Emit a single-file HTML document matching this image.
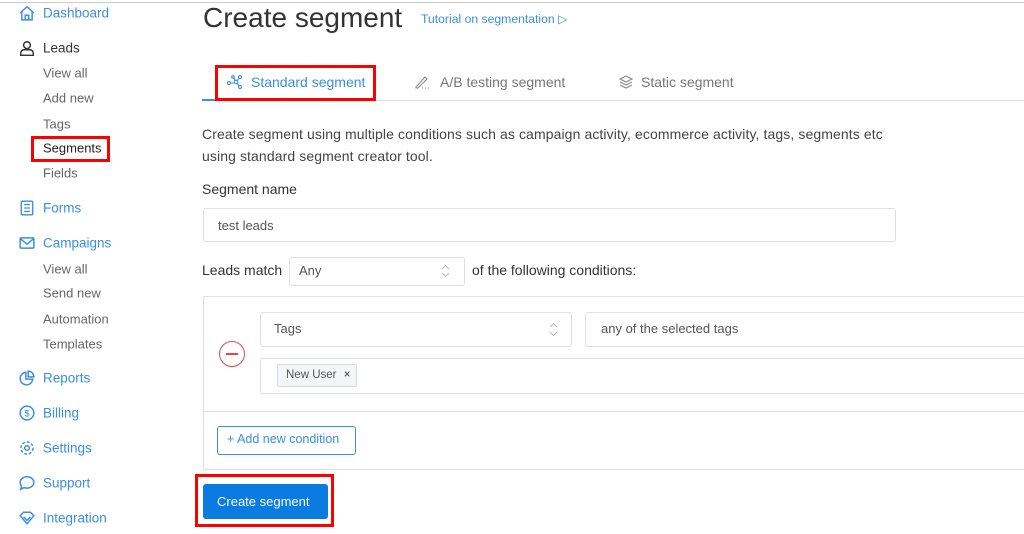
<!DOCTYPE html>
<html><head><style>
*{margin:0;padding:0;box-sizing:border-box}
body{width:1024px;height:534px;overflow:hidden;background:#fff;font-family:"Liberation Sans",sans-serif;position:relative;color:#333}
.a{position:absolute;white-space:nowrap}
.nav{left:43px;font-size:13.5px;color:#3a8fe0;transform:translateY(-50%)}
.sub{left:43px;font-size:13px;color:#666;transform:translateY(-50%)}
.ic{position:absolute;left:19px;width:16px;height:16px;transform:translateY(-50%)}
.box{position:absolute;border:1px solid #dcdfe3;border-radius:3px;background:#fff}
.red{position:absolute;border:3px solid #f00}
</style></head><body>
<div class="a" style="left:0;top:2px;width:1024px;height:1px;background:#ccc"></div>

<svg class="ic" style="top:13px" viewBox="0 0 14 14" fill="none" stroke="#3a8fe0" stroke-width="1.3"><path d="M1 7L7 1.5 13 7M2.5 5.5V13h9V5.5M5.5 13V9h3v4"/></svg>
<div class="a nav" style="top:13px">Dashboard</div>
<svg class="ic" style="top:48px" viewBox="0 0 14 14" fill="none" stroke="#333" stroke-width="1.3"><circle cx="7" cy="4.5" r="3"/><path d="M1.5 13.5v-2a3 3 0 013-3h5a3 3 0 013 3v2z"/></svg>
<div class="a nav" style="top:48px;color:#333">Leads</div>
<div class="a sub" style="top:73px">View all</div>
<div class="a sub" style="top:98px">Add new</div>
<div class="a sub" style="top:124px">Tags</div>
<div class="a sub" style="top:148px;color:#222">Segments</div>
<div class="red" style="left:31px;top:136px;width:79px;height:26px"></div>
<div class="a sub" style="top:173px">Fields</div>
<svg class="ic" style="top:208px" viewBox="0 0 14 14" fill="none" stroke="#3a8fe0" stroke-width="1.2"><rect x="2" y="1" width="10" height="12" rx="1"/><path d="M4.5 4h5M4.5 7h5M4.5 10h5"/></svg>
<div class="a nav" style="top:208px">Forms</div>
<svg class="ic" style="top:243px" viewBox="0 0 14 14" fill="none" stroke="#3a8fe0" stroke-width="1.3"><rect x="1" y="2.5" width="12" height="9" rx="1"/><path d="M1 3l6 5 6-5"/></svg>
<div class="a nav" style="top:243px">Campaigns</div>
<div class="a sub" style="top:269px">View all</div>
<div class="a sub" style="top:293px">Send new</div>
<div class="a sub" style="top:319px">Automation</div>
<div class="a sub" style="top:344px">Templates</div>
<svg class="ic" style="top:378px" viewBox="0 0 14 14" fill="none" stroke="#3a8fe0" stroke-width="1.3"><path d="M6 2a5.5 5.5 0 106 6H6z"/><path d="M8 1v5h5a5 5 0 00-5-5z"/></svg>
<div class="a nav" style="top:378px">Reports</div>
<svg class="ic" style="top:413px" viewBox="0 0 14 14" fill="none" stroke="#3a8fe0" stroke-width="1.3"><circle cx="7" cy="7" r="6"/><text x="7" y="10" font-size="8" text-anchor="middle" fill="#3a8fe0" stroke="none">$</text></svg>
<div class="a nav" style="top:413px">Billing</div>
<svg class="ic" style="top:448px" viewBox="0 0 14 14" fill="none" stroke="#3a8fe0" stroke-width="1.3"><circle cx="7" cy="7" r="2"/><circle cx="7" cy="7" r="5.3" stroke-dasharray="2.5 1.6"/></svg>
<div class="a nav" style="top:448px">Settings</div>
<svg class="ic" style="top:483px" viewBox="0 0 14 14" fill="none" stroke="#3a8fe0" stroke-width="1.3"><path d="M7 1.5c3.3 0 6 2.2 6 5s-2.7 5-6 5c-1 0-1.8-.2-2.6-.5L1.5 12.5l.8-2.6C1.5 9 1 7.8 1 6.5c0-2.8 2.7-5 6-5z"/><path d="M4.5 7h.1M7 7h.1M9.5 7h.1"/></svg>
<div class="a nav" style="top:483px">Support</div>
<svg class="ic" style="top:518px" viewBox="0 0 14 14" fill="none" stroke="#3a8fe0" stroke-width="1.3"><path d="M1 5l3-3h6l3 3-6 7z"/><path d="M4 6l3 3 3-3"/></svg>
<div class="a nav" style="top:518px">Integration</div>

<div class="a" style="left:203px;top:2px;font-size:28px;color:#333">Create segment</div>
<div class="a" style="left:421px;top:12px;font-size:12.2px;color:#3a8fe0">Tutorial on segmentation ▷</div>

<div class="a" style="left:202px;top:100px;width:822px;height:1px;background:#dcdfe3"></div>
<div class="a" style="left:202px;top:99px;width:164px;height:2px;background:#3a8fe0"></div>
<svg class="a" style="left:227px;top:75px" width="16" height="14" viewBox="0 0 16 14" fill="none" stroke="#3a8fe0" stroke-width="1.1"><circle cx="2" cy="8" r="1.5"/><circle cx="9" cy="7" r="1.8"/><circle cx="13" cy="2" r="1.5"/><circle cx="13" cy="12" r="1.5"/><circle cx="6" cy="2" r="1.3"/><path d="M3.5 8h3.7M10.2 5.7l1.8-2.5M10.2 8.3l1.8 2.5M7 3l1 2.5"/></svg>
<div class="a" style="left:251px;top:74px;font-size:14px;color:#3a8fe0">Standard segment</div>
<div class="red" style="left:215px;top:65px;width:161px;height:36px"></div>
<svg class="a" style="left:414px;top:75px" width="18" height="15" viewBox="0 0 18 15" fill="none" stroke="#888" stroke-width="1.1"><path d="M2 12L11 2l2 2-9 9H2z"/><path d="M8 13h1M11 13h1M14 13h1"/></svg>
<div class="a" style="left:440px;top:74px;font-size:14px;color:#777">A/B testing segment</div>
<svg class="a" style="left:618px;top:75px" width="16" height="14" viewBox="0 0 16 14" fill="none" stroke="#888" stroke-width="1.1"><path d="M8 1l6 3-6 3-6-3z"/><path d="M2 7l6 3 6-3M2 10l6 3 6-3"/></svg>
<div class="a" style="left:641px;top:74px;font-size:14px;color:#777">Static segment</div>

<div class="a" style="left:202px;top:123px;font-size:14px;color:#444;line-height:22px;letter-spacing:0.1px">Create segment using multiple conditions such as campaign activity, ecommerce activity, tags, segments etc<br>using standard segment creator tool.</div>
<div class="a" style="left:202px;top:181px;font-size:14px;color:#333">Segment name</div>
<div class="box" style="left:203px;top:208px;width:693px;height:34px"></div>
<div class="a" style="left:218px;top:218px;font-size:13px;color:#555">test leads</div>

<div class="a" style="left:202px;top:262px;font-size:14px;color:#333">Leads match</div>
<div class="box" style="left:289px;top:257px;width:176px;height:29px"></div>
<div class="a" style="left:299px;top:263px;font-size:13px;color:#555">Any</div>
<svg class="a" style="left:441px;top:264px" width="9" height="14" viewBox="0 0 9 14" fill="none" stroke="#bbb" stroke-width="1"><path d="M1 5l3.5-3.5L8 5M1 9l3.5 3.5L8 9"/></svg>
<div class="a" style="left:472px;top:262px;font-size:14px;color:#333">of the following conditions:</div>

<div class="box" style="left:203px;top:296px;width:830px;height:174px;border-radius:2px"></div>
<div class="a" style="left:204px;top:411px;width:820px;height:1px;background:#dcdfe3"></div>
<div class="box" style="left:260px;top:312px;width:312px;height:35px"></div>
<div class="a" style="left:274px;top:321px;font-size:13px;color:#555">Tags</div>
<svg class="a" style="left:549px;top:322px" width="9" height="15" viewBox="0 0 9 15" fill="none" stroke="#bbb" stroke-width="1"><path d="M1 5l3.5-3.5L8 5M1 10l3.5 3.5L8 10"/></svg>
<div class="box" style="left:585px;top:312px;width:450px;height:35px"></div>
<div class="a" style="left:601px;top:321px;font-size:13px;color:#555">any of the selected tags</div>
<div class="a" style="left:219px;top:341px;width:26px;height:26px;border:1.5px solid #e04a4a;border-radius:50%"></div>
<div class="a" style="left:226px;top:353px;width:12px;height:2px;background:#e04a4a"></div>
<div class="box" style="left:260px;top:358px;width:775px;height:36px"></div>
<div class="a" style="left:277px;top:364px;width:80px;height:23px;border:1px solid #d6dae0;background:#f3f5f8;border-radius:2px"></div>
<div class="a" style="left:286px;top:368px;font-size:11.5px;color:#555;line-height:15px">New User <span style="margin-left:4px;color:#333">×</span></div>

<div class="a" style="left:217px;top:426px;width:139px;height:29px;border:1px solid #3a8fe0;border-radius:3px"></div>
<div class="a" style="left:227px;top:432px;font-size:12.5px;color:#3a8fe0">+ Add new condition</div>

<div class="a" style="left:203px;top:484px;width:125px;height:35px;background:#0a7be0;border-radius:3px"></div>
<div class="a" style="left:217px;top:494px;font-size:13px;color:#fff">Create segment</div>
<div class="red" style="left:195px;top:474px;width:139px;height:53px"></div>
</body></html>
